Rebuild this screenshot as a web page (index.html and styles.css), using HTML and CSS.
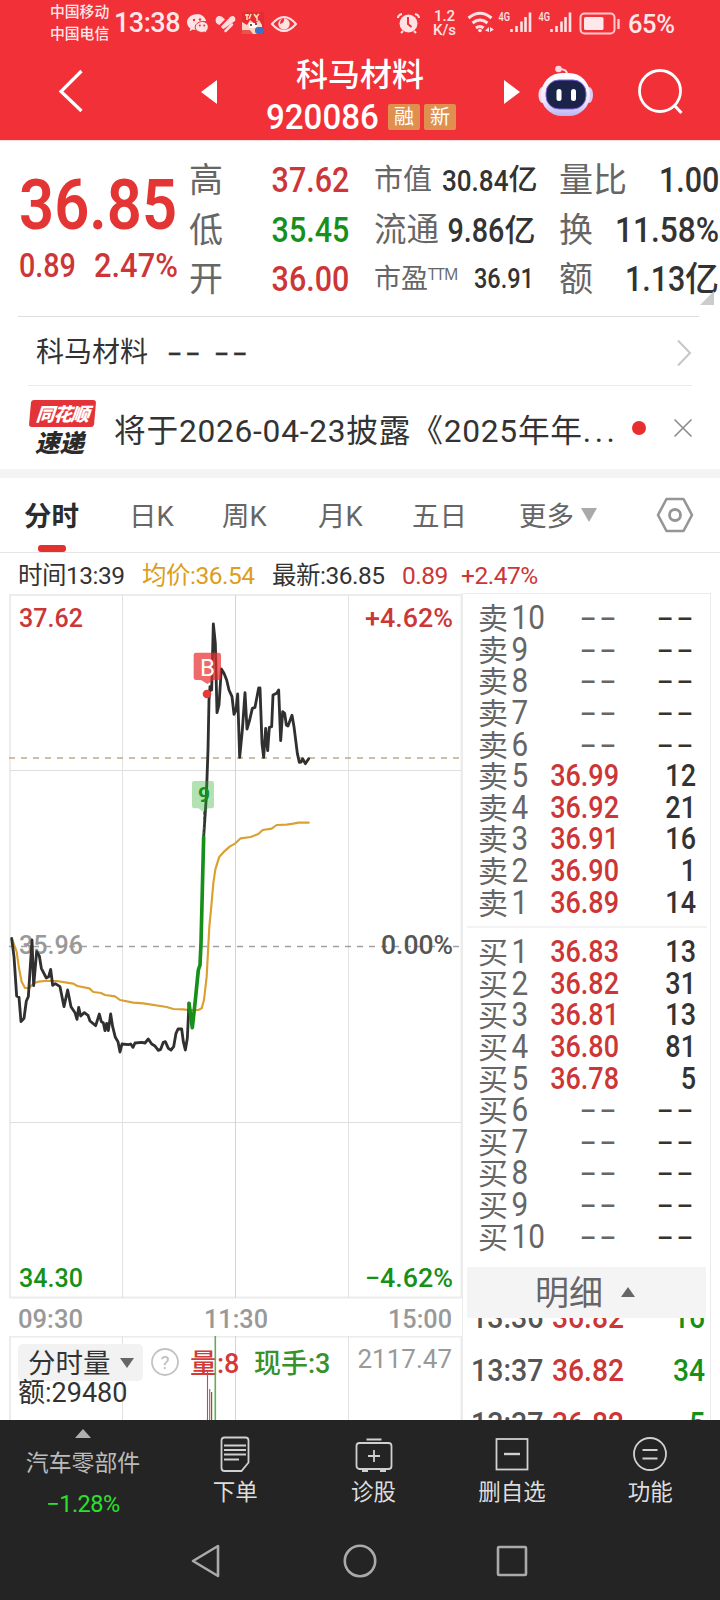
FILE: index.html
```html
<!DOCTYPE html>
<html lang="zh-CN">
<head>
<meta charset="utf-8">
<title>科马材料 920086</title>
<link rel="stylesheet" href="styles.css">
</head>
<body>
<div class="app">
  <div class="status">
    <div class="carriers"><span>中国移动</span><span>中国电信</span></div>
    <span class="clock">13:38</span>
    <svg class="status-left" width="112" height="26" viewBox="185 9 112 26">
      <g fill="#ffe3e4">
        <path d="M197.500 13c-6 0-10.500 3.700-10.500 8.300 0 2.500 1.300 4.700 3.400 6.200l-.8 2.800 3.200-1.700c1 .3 2 .5 3.200.5-.9-5.500 4-9.300 10.200-9.100-1.200-4-4.700-7-8.700-7z"/>
        <path d="M201.500 20.500c-3.600.6-6.300 2.900-6.300 5.500 0 2.800 2.600 5.400 6.600 5.400 1 0 1.800-.1 2.600-.4l2.500 1.300-.6-2.200c1.400-1.100 2-2.500 2-4.100 0-3.400-3-5.900-6.800-5.500z" stroke="#f23038" stroke-width="1"/>
      </g>
      <g fill="#f23038"><circle cx="194" cy="19" r="1.200"/><circle cx="200" cy="18.500" r="1.200"/><circle cx="199.800" cy="24.500" r="1"/><circle cx="204.200" cy="24.500" r="1"/></g>
      <path d="M216 21.500q-1.500-5 2.500-6.500q3-.5 5 2l1.500 1.500l-5.500 5.500q-2.500-1-3.500-2.500zM221 25.500l9-9.500q3-2 5 .5q.8 2 0 3.500l-11.500 8q-2-1-2.500-2.500zM226 30l6-7" fill="#ffdcde"/>
      <path d="M219.500 25.500l9-9M225 30.500l9-9" stroke="#f23038" stroke-width="1.300"/>
      <path d="M225.500 30l6.500-6.500" stroke="#ffdcde" stroke-width="2.500" stroke-linecap="round"/>
      <rect x="242" y="11" width="22" height="22" fill="#e52c35"/>
      <path d="M245 14h4m-2-1v6m4-6l-2 5m5-5l2 3 3-3m-2 2v5" stroke="#ffe0b0" stroke-width="1.500" fill="none"/>
      <path d="M242 21l5 3 3-5 5 4 4-4 3 5v9h-20z" fill="#fbd5c8"/><path d="M249 22h8v5h-8z" fill="#fff"/>
      <circle cx="251" cy="24" r="1" fill="#222"/><circle cx="256" cy="23" r="1" fill="#222"/>
      <path d="M242 29h8l3 4h-11z" fill="#e8534a"/><rect x="255" y="26" width="9" height="7" rx="3" fill="#3973c8"/>
      <path d="M272 23q12-14 24 0q-12 14-24 0z" fill="none" stroke="#ffe3e4" stroke-width="2"/>
      <circle cx="284" cy="23" r="5.700" fill="#ffe3e4"/><path d="M284 17q1 5-4 6 0-5 4-6z" fill="#f23038"/>
    </svg>
    <svg class="status-right" width="226" height="30" viewBox="395 8 226 30">
      <circle cx="408.500" cy="23.500" r="9" fill="#ffe3e4"/>
      <path d="M408 17v7l3.500 3" fill="none" stroke="#f23038" stroke-width="2"/>
      <path d="M398 18q0-3 4-4m17 4q0-3-4-4M403 31l-2 2m13-2l2 2" fill="none" stroke="#ffe3e4" stroke-width="2"/>
      <g class="status-text" fill="#ffe3e4">
        <text x="434" y="21" font-size="15" textLength="21">1.2</text>
        <text x="433" y="35" font-size="15" textLength="23">K/s</text>
        <text x="498.500" y="21" font-size="12.500" textLength="11.500" lengthAdjust="spacingAndGlyphs">4G</text>
        <text x="538.500" y="21" font-size="12.500" textLength="11.500" lengthAdjust="spacingAndGlyphs">4G</text>
      </g>
      <g fill="none" stroke="#ffe3e4" stroke-width="3"><path d="M468.500 18q11.500-9.500 23 0"/><path d="M472.500 23q7.500-6 15 0"/><path d="M476 28q4-3 7.500 0"/></g>
      <circle cx="480" cy="30.500" r="1.800" fill="#ffe3e4"/>
      <path d="M489 27v5l-4-1.500zM490 27v5l4-2.500z" fill="#ffe3e4"/>
      <path d="M511.500 29v3M516.500 26v6M521.500 21.500v10.500M525.500 17v15M530 12.500v19.500M551.500 29v3M556.500 26v6M561.500 21.500v10.500M565.500 17v15M570 12.500v19.500" stroke="#ffe3e4" stroke-width="2.600"/>
      <rect x="580.500" y="13.500" width="34" height="20" rx="4" fill="none" stroke="#ffc9cc" stroke-width="2"/>
      <rect x="584" y="17" width="19.500" height="13" rx="1.500" fill="#ffe8e9"/>
      <path d="M618.500 19v10" stroke="#ffc9cc" stroke-width="2.500"/>
    </svg>
    <span class="battery">65%</span>
  </div>

  <div class="header">
    <svg class="back" width="26" height="44" viewBox="0 0 26 44"><path d="M23.500 2L3 22.500L23.500 42" fill="none" stroke="#fff" stroke-width="3.200"/></svg>
    <svg class="prev" width="16" height="24" viewBox="0 0 16 24"><path d="M16 0v24L0 12z" fill="#fff"/></svg>
    <div class="title">
      <div class="name">科马材料</div>
      <div class="code"><span class="code-num">920086</span><span class="badge">融</span><span class="badge">新</span></div>
    </div>
    <svg class="next" width="16" height="24" viewBox="0 0 16 24"><path d="M0 0v24l16-12z" fill="#fff"/></svg>
    <svg class="robot" width="56" height="52" viewBox="0 0 56 52">
      <defs><linearGradient id="shell" x1="0" y1="0" x2="0" y2="1"><stop offset="0" stop-color="#fff"/><stop offset=".65" stop-color="#f3e6fb"/><stop offset="1" stop-color="#b9b7f2"/></linearGradient></defs>
      <path d="M29 9q0-5-8-5" fill="none" stroke="#f9dbe4" stroke-width="2"/><circle cx="20.500" cy="4" r="3.300" fill="#f7d7e2"/>
      <ellipse cx="4.500" cy="30" rx="4" ry="8" fill="#e9daf4"/><ellipse cx="51" cy="30" rx="4" ry="8" fill="#d7cdf6"/>
      <rect x="3" y="8" width="49" height="43" rx="21" fill="url(#shell)"/>
      <rect x="8" y="15" width="40" height="29" rx="13" fill="#1b2349" stroke="#7b62df" stroke-width="1"/>
      <rect x="18.500" y="24" width="5" height="12" rx="2.500" fill="#fff"/><rect x="33" y="24" width="5" height="12" rx="2.500" fill="#fff"/>
    </svg>
    <svg class="search" width="48" height="46" viewBox="0 0 48 46"><circle cx="23" cy="22" r="20.500" fill="none" stroke="#fff" stroke-width="2.800"/><path d="M37 36l7.500 8" stroke="#fff" stroke-width="3"/></svg>
  </div>

  <div class="quote">
    <div class="last">
      <div class="price"><span class="n l">36.85</span></div>
      <div class="delta"><span class="n l">0.89</span><span class="n l pct">2.47%</span></div>
    </div>
    <div class="stat s1">
      <div><span>高</span><b class="n red">37.62</b></div>
      <div><span>低</span><b class="n green">35.45</b></div>
      <div><span>开</span><b class="n red">36.00</b></div>
    </div>
    <div class="stat s2">
      <div class="a"><span>市值</span><b><i class="n">30.84</i>亿</b></div>
      <div class="b"><span>流通</span><b><i class="n">9.86</i>亿</b></div>
      <div class="c"><span>市盈<sup>TTM</sup></span><b><i class="n">36.91</i></b></div>
    </div>
    <div class="stat s3">
      <div><span>量比</span><b><i class="n">1.00</i></b></div>
      <div><span>换</span><b><i class="n wide">11.58%</i></b></div>
      <div><span>额</span><b><i class="n">1.13</i>亿</b></div>
    </div>
    <i class="corner"></i>
  </div>

  <div class="company">
    <span>科马材料</span><span class="hy">--</span><span class="hy">--</span>
    <svg width="16" height="28" viewBox="0 0 16 28"><path d="M2 1.500L14 14L2 26.500" fill="none" stroke="#c6c6c6" stroke-width="2"/></svg>
  </div>

  <div class="notice">
    <div class="brand"><span class="brand-top">同花顺</span><span class="brand-bottom">速递</span></div>
    <span class="news">将于2026-04-23披露《2025年年<i>...</i></span>
    <i class="dot"></i>
    <svg width="20" height="20" viewBox="0 0 20 20"><path d="M1.500 1.500l17 17m0-17l-17 17" stroke="#8e8e8e" stroke-width="1.700"/></svg>
  </div>

  <div class="tabs">
    <span class="t1 active">分时</span><span class="t2">日K</span><span class="t3">周K</span><span class="t4">月K</span><span class="t5">五日</span>
    <span class="t6">更多</span><i class="down"></i>
    <svg width="38" height="36" viewBox="0 0 38 36"><path d="M10.500 2h17l8.500 16l-8.500 16h-17l-8.500-16z" fill="none" stroke="#959595" stroke-width="2.600" stroke-linejoin="round"/><circle cx="19" cy="18" r="5.500" fill="none" stroke="#959595" stroke-width="2.800"/></svg>
  </div>

  <div class="info">
    <span class="i1">时间13:39</span><span class="i2">均价:36.54</span><span class="i3">最新:36.85</span><span class="i4">0.89</span><span class="i5">+2.47%</span>
  </div>

  <div class="main">
    <div class="chart">
      <svg width="463" height="746" viewBox="0 590 463 746">
        <g fill="none" stroke="#ececec">
          <rect x="10" y="595" width="451.500" height="702.500" stroke-width="2"/>
          <path d="M10 770.500h451M10 1122.500h451" stroke="#dedede"/>
          <path d="M122.500 595v703M348.500 595v703" stroke="#e2e2e2"/><path d="M235.500 595v703" stroke="#d4d4d4"/>
        </g>
        <path d="M9 758h452" stroke="#bfa985" stroke-width="1.700" stroke-dasharray="6 6"/>
        <path d="M9 946.500h452" stroke="#a0a0a0" stroke-width="1.700" stroke-dasharray="6 6"/>
        <g class="axis">
          <text x="19" y="627" fill="#cc3636" textLength="64" lengthAdjust="spacingAndGlyphs">37.62</text>
          <text x="365" y="627" fill="#cc3636" textLength="88" lengthAdjust="spacingAndGlyphs">+4.62%</text>
          <text x="19" y="953.500" fill="#999" textLength="64" lengthAdjust="spacingAndGlyphs">35.96</text>
          <text x="381" y="953.500" fill="#555" textLength="72" lengthAdjust="spacingAndGlyphs">0.00%</text>
          <text x="19" y="1287" fill="#169016" textLength="64" lengthAdjust="spacingAndGlyphs">34.30</text>
          <text x="365" y="1287" fill="#169016" textLength="88" lengthAdjust="spacingAndGlyphs">−4.62%</text>
          <text x="18" y="1328" fill="#999" textLength="65" lengthAdjust="spacingAndGlyphs">09:30</text>
          <text x="204" y="1328" fill="#999" textLength="64" lengthAdjust="spacingAndGlyphs">11:30</text>
          <text x="388" y="1328" fill="#999" textLength="64" lengthAdjust="spacingAndGlyphs">15:00</text>
        </g>
        <g transform="translate(0 590) scale(.333333)" fill="none" stroke-linejoin="round" stroke-linecap="round">
          <polyline stroke="#dba032" stroke-width="6.500" points="36,1047 50,1085 57,1135 65,1175 75,1194 88,1194 100,1180 115,1175 135,1173 170,1173 200,1178 220,1181 232,1188 268,1195 280,1206 303,1209 315,1215 345,1219 360,1230 400,1238 430,1240 500,1251 520,1257 550,1258 565,1260 595,1260 605,1255 612,1230 620,1160 628,1010 632,970 640,880 646,838 658,800 672,785 690,769 706,760 722,745 752,741 775,732 788,720 815,716 830,705 860,704 880,701 895,698 926,698"/>
          <polyline stroke="#303030" stroke-width="8.500" points="35,1045 42,1100 50,1218 57,1222 63,1295 72,1285 79,1233 85,1220 96,1050 101,1187 110,1085 118,1098 124,1135 139,1164 146,1160 152,1138 158,1186 166,1181 180,1190 192,1250 203,1200 213,1250 225,1268 231,1288 236,1252 242,1278 253,1268 264,1276 270,1293 287,1307 298,1272 304,1295 310,1298 315,1322 320,1300 325,1322 332,1272 338,1310 346,1342 354,1355 360,1386 366,1362 385,1364 392,1362 399,1372 405,1359 425,1357 435,1359 445,1347 455,1362 464,1367 475,1381 482,1378 490,1357 496,1355 505,1375 513,1380 521,1370 528,1330 534,1317 545,1317 550,1355 556,1380 562,1345 567,1240"/>
          <polyline stroke="#303030" stroke-width="8.500" points="611,740 619,620 624,480 627,330 630,290 635,300 640,102 646,160 651,368 657,345 664,237 672,250 680,270 687,300 696,320 702,373 708,360 713,312 719,502 727,420 735,308 741,417 749,390 757,355 765,352 776,294 780,294 786,460 791,502 797,415 803,482 808,412 815,410 819,315 830,310 836,300 842,452 848,365 854,370 859,405 864,408 876,376 882,410 892,490 898,517 903,516 908,506 916,521 926,506"/>
          <polyline stroke="#168f1b" stroke-width="11" points="567,1240 571,1270 577,1313 585,1240 595,1140 600,1125 603,1060 607,900 611,742"/>
          <path d="M611 665v70" stroke="#168f1b" stroke-width="3" stroke-dasharray="9 6" stroke-linecap="butt"/>
          <path d="M588 188h68q7 0 7 7v68q0 7-7 7h-15l-19 12l-19-12h-15q-7 0-7-7v-68q0-7 7-7z" fill="#e82c2c" fill-opacity=".7"/>
          <circle cx="621" cy="312" r="13" fill="#e43a3a"/>
          <path d="M583 573h52q7 0 7 7v68q0 7-7 7h-10l-14 12l-16-12h-12q-7 0-7-7v-68q0-7 7-7z" fill="#35b135" fill-opacity=".38"/>
        </g>
        <text class="mark" x="200" y="676" fill="#fff" font-size="24">B</text>
        <text class="mark nine" x="198" y="802" fill="#168f1b" font-size="21">9</text>
      </svg>
      <div class="volume">
        <svg class="vol-lines" width="463" height="84" viewBox="0 1336 463 84">
          <path d="M9 1336.500h453M10 1336v84M461.500 1336v84" stroke="#ececec" stroke-width="2"/>
          <path d="M122.500 1336v84M348.500 1336v84" stroke="#e2e2e2"/><path d="M235.500 1336v84" stroke="#d4d4d4"/>
        </svg>
        <span class="picker">分时量<i class="down dark"></i></span>
        <svg class="help" width="28" height="28" viewBox="0 0 28 28"><circle cx="14" cy="14" r="13" fill="none" stroke="#c3c3c3" stroke-width="1.800"/><text x="14" y="20.500" text-anchor="middle">?</text></svg>
        <span class="v1">量:8</span><span class="v2">现手:3</span><span class="v3">2117.47</span>
        <span class="v4">额:29480</span>
        <svg class="vol-lines" width="463" height="84" viewBox="0 1336 463 84">
          <path d="M215.300 1335v85" stroke="#5faf55" stroke-width="1.600"/><path d="M207.500 1371v49M209.700 1389v31" stroke="#cf4747" stroke-width="1.100"/><path d="M211.600 1392v28" stroke="#3f7f35" stroke-width="1.200"/>
        </svg>
      </div>
    </div>

    <div class="book">
      <div class="side">
        <div class="row"><span>卖<i>10</i></span><b class="hy">--</b><em class="hy">--</em></div>
        <div class="row"><span>卖<i>9</i></span><b class="hy">--</b><em class="hy">--</em></div>
        <div class="row"><span>卖<i>8</i></span><b class="hy">--</b><em class="hy">--</em></div>
        <div class="row"><span>卖<i>7</i></span><b class="hy">--</b><em class="hy">--</em></div>
        <div class="row"><span>卖<i>6</i></span><b class="hy">--</b><em class="hy">--</em></div>
        <div class="row"><span>卖<i>5</i></span><b class="n">36.99</b><em class="n">12</em></div>
        <div class="row"><span>卖<i>4</i></span><b class="n">36.92</b><em class="n">21</em></div>
        <div class="row"><span>卖<i>3</i></span><b class="n">36.91</b><em class="n">16</em></div>
        <div class="row"><span>卖<i>2</i></span><b class="n">36.90</b><em class="n">1</em></div>
        <div class="row"><span>卖<i>1</i></span><b class="n">36.89</b><em class="n">14</em></div>
      </div>
      <div class="side buy">
        <div class="row"><span>买<i>1</i></span><b class="n">36.83</b><em class="n">13</em></div>
        <div class="row"><span>买<i>2</i></span><b class="n">36.82</b><em class="n">31</em></div>
        <div class="row"><span>买<i>3</i></span><b class="n">36.81</b><em class="n">13</em></div>
        <div class="row"><span>买<i>4</i></span><b class="n">36.80</b><em class="n">81</em></div>
        <div class="row"><span>买<i>5</i></span><b class="n">36.78</b><em class="n">5</em></div>
        <div class="row"><span>买<i>6</i></span><b class="hy">--</b><em class="hy">--</em></div>
        <div class="row"><span>买<i>7</i></span><b class="hy">--</b><em class="hy">--</em></div>
        <div class="row"><span>买<i>8</i></span><b class="hy">--</b><em class="hy">--</em></div>
        <div class="row"><span>买<i>9</i></span><b class="hy">--</b><em class="hy">--</em></div>
        <div class="row"><span>买<i>10</i></span><b class="hy">--</b><em class="hy">--</em></div>
      </div>
      <div class="detail">明细<i class="up"></i></div>
      <div class="ticks">
        <div class="tick"><span class="n l">13:36</span><b class="n">36.82</b><em class="n">16</em></div>
        <div class="tick"><span class="n l">13:37</span><b class="n">36.82</b><em class="n">34</em></div>
        <div class="tick"><span class="n l">13:37</span><b class="n">36.82</b><em class="n">5</em></div>
      </div>
    </div>
  </div>

  <div class="footer">
    <div class="actions">
      <div class="sector"><i class="up"></i><span>汽车零部件</span><b>−1.28%</b></div>
      <div class="act"><svg width="40" height="38" viewBox="0 0 40 38"><path d="M7.500 2.500h21q3 0 3 3v22l-7 8.500h-17q-3 0-3-3v-27.500q0-3 3-3z"/><path d="M7 10.500h22M7 15h22M7 19.500h22M7 24.500h15"/></svg><span>下单</span></div>
      <div class="act"><svg width="40" height="38" viewBox="0 0 40 38"><rect x="2.500" y="8" width="35" height="26" rx="3"/><path d="M12.500 4.500h15M20 15v12M14 21h12M8 36h6M26 36h6"/></svg><span>诊股</span></div>
      <div class="act"><svg width="40" height="38" viewBox="0 0 40 38"><rect x="4.500" y="4" width="31" height="30.500"/><path d="M12 19h16" stroke-width="2.400"/></svg><span>删自选</span></div>
      <div class="act"><svg width="40" height="38" viewBox="0 0 40 38"><circle cx="20" cy="19" r="16"/><path d="M12.500 15h15M12.500 23.500h15"/></svg><span>功能</span></div>
    </div>
    <div class="nav">
      <svg width="30" height="36" viewBox="0 0 30 36"><path d="M27 3v30L2 18z" stroke-linejoin="round"/></svg>
      <svg width="36" height="36" viewBox="0 0 36 36"><circle cx="18" cy="18" r="15.200"/></svg>
      <svg width="32" height="32" viewBox="0 0 32 32"><rect x="2" y="2" width="28" height="28" rx="1"/></svg>
    </div>
  </div>
</div>
</body>
</html>
```

FILE: styles.css
```css
* { box-sizing: border-box; }
body { margin: 0; background: #fff; font-family: Roboto, "Noto Sans CJK SC", sans-serif; color: #333; }
i, em { font-style: normal; }
b { font-weight: 500; }
svg { display: block; flex: none; }
.app { width: 720px; height: 1600px; overflow: hidden; display: flex; flex-direction: column; }
.n { display: inline-block; transform: scaleX(.87); transform-origin: 100% 50%; }
.n.l { transform-origin: 0 50%; }
.red { color: #cc3636; }
.green { color: #168f1b; }
.hy { display: inline-block; font-family: "DejaVu Sans", sans-serif; letter-spacing: 1.2px; transform: scaleX(1.5); transform-origin: 100% 50%; font-weight: 400; }

.status { height: 46px; background: #f23038; color: #ffe8e9; display: flex; align-items: center; padding-left: 50px; flex: none; }
.carriers { display: flex; flex-direction: column; font-size: 14.800px; line-height: 22px; width: 62px; font-weight: 500; }
.clock { font-size: 27px; width: 73px; padding-left: 2px; letter-spacing: -.5px; font-weight: 500; }
.status-right { margin-left: 98px; }
.status-text { font-family: Roboto, sans-serif; font-weight: 500; }
.battery { font-size: 25.500px; font-weight: 500; margin-left: 7px; letter-spacing: -.4px; padding-top: 2px; }

.header { height: 94px; background: #f23038; color: #fff; display: flex; align-items: flex-start; padding-left: 58px; flex: none; }
.back { margin-top: 23px; }
.prev { margin: 34px 0 0 117px; }
.title { width: 240px; margin-left: 49px; }
.name { font-size: 32px; line-height: 40px; margin-top: 9px; padding-left: 30px; font-weight: 500; }
.code { display: flex; height: 40px; align-items: center; margin-top: 2px; }
.code-num { font-size: 35px; font-weight: 500; transform: scaleX(.945); transform-origin: 0 50%; width: 122px; }
.badge { width: 32px; height: 26px; background: #e0904e; border-radius: 2px; font-size: 20px; line-height: 26px; text-align: center; margin-right: 4px; margin-top: -1px; }
.next { margin: 34px 0 0 -2px; }
.robot { margin: 19px 0 0 18px; }
.search { margin: 23px 0 0 43px; }

.quote { height: 177px; display: flex; position: relative; flex: none; border-top: 1px solid #ffdfe1; }
.quote::after { content: ""; position: absolute; left: 18px; right: 21px; bottom: 0; height: 1px; background: #dedede; }
.last { width: 189px; padding-left: 19px; color: #e43535; }
.price { font-size: 69.500px; line-height: 80px; font-weight: 600; margin-top: 25px; }
.price .n { transform: scaleX(.885); }
.delta { font-size: 33px; line-height: 40px; margin-top: 0; color: #cc3636; font-weight: 500; display: flex; }
.delta .pct { margin-left: 10px; transform: scaleX(.935); }
.stat { display: flex; flex-direction: column; padding-top: 15px; flex: none; }
.stat > div { height: 49.500px; display: flex; align-items: center; justify-content: space-between; line-height: 49px; white-space: nowrap; }
.stat span { color: #666; }
.stat b { display: flex; }
.s1 { width: 160px; font-size: 34px; }
.s1 b, .s3 b { font-size: 35px; }
.s2 { width: 161px; margin-left: 25px; }
.s2 .a { font-size: 29px; }
.s2 .a i { font-size: 30px; }
.s2 .b { font-size: 32.500px; }
.s2 .b b { font-size: 31px; }
.s2 .b i { font-size: 33px; }
.s2 .c { font-size: 27px; padding-right: 1px; }
.s2 .c i { font-size: 27px; }
.s2 .c sup { font-family: "Open Sans", sans-serif; font-size: 16px; font-weight: 400; letter-spacing: -.8px; line-height: 0; vertical-align: 8px; }
.s3 { width: 160px; margin-left: 24px; font-size: 34px; }
.s3 > div:nth-child(3) b { font-size: 34px; }
.s3 > div:nth-child(3) i { font-size: 35px; }
.s3 .wide { transform: scaleX(.905); }
.corner { position: absolute; left: 700px; top: 150px; border: 7px solid; border-color: transparent #ccc #ccc transparent; }

.company { height: 69px; margin: 0 28px; border-bottom: 1px solid #eaeaea; display: flex; align-items: center; padding: 4px 0 0 8px; font-size: 28px; line-height: 40px; flex: none; }
.company .hy { transform-origin: 0 50%; margin-left: 19px; width: 28px; font-size: 28px; letter-spacing: 2px; -webkit-text-stroke: .3px #333; }
.company svg { margin-left: auto; }

.notice { height: 83px; display: flex; align-items: center; padding-left: 28px; flex: none; }
.brand { width: 68px; height: 56px; display: flex; flex-direction: column; align-items: center; font-weight: 900; font-style: italic; }
.brand span { font-family: "Noto Sans CJK SC", sans-serif; }
.brand-top { width: 65px; height: 28px; background: #e43338; color: #fff; border-radius: 3px; font-size: 18.500px; line-height: 27px; text-align: center; transform: skewX(-5deg); letter-spacing: -1px; }
.brand-bottom { font-size: 24.500px; line-height: 29px; color: #2b2b2b; margin-left: -5px; }
.news { font-size: 31.700px; margin-left: 18px; width: 508px; white-space: nowrap; letter-spacing: .75px; }
.news i { letter-spacing: 3.500px; }
.dot { width: 14px; height: 14px; border-radius: 50%; background: #e82e2e; margin: 0 0 0 10px; }
.notice svg { margin-left: 27px; }

.tabs { height: 84px; border-top: 9px solid #f4f4f4; border-bottom: 1px solid #e6e6e6; display: flex; align-items: center; padding-left: 24px; font-size: 27.500px; color: #666; position: relative; flex: none; }
.tabs span { line-height: 70px; padding-top: 4px; }
.tabs .active { color: #2c2c2c; font-weight: 700; position: relative; }
.active::after { content: ""; position: absolute; left: 14px; bottom: 0; width: 28px; height: 7px; border-radius: 3px; background: #e53030; }
.t1 { width: 105px; } .t2 { width: 93px; } .t3 { width: 96px; } .t4 { width: 94px; } .t5 { width: 107px; } .t6 { width: 62px; }
.down { border: 8px solid transparent; border-top: 14px solid #aaa; border-bottom: 0; }
.tabs svg { margin-left: 59px; }

.info { height: 40px; display: grid; grid-template-columns: 124px 130px 130px 59px 90px; padding: 3px 0 0 18px; font-size: 24.500px; line-height: 39px; flex: none; white-space: nowrap; letter-spacing: -.5px; }
.i2 { color: #dc9d20; } .i4, .i5 { color: #cc3636; }

.main { height: 830px; display: flex; position: relative; margin-top: -3px; flex: none; overflow: hidden; }
.chart { width: 463px; }
.axis text { font-family: Roboto, sans-serif; font-size: 26px; font-weight: 500; }
.mark { font-family: Roboto, sans-serif; }
.nine { font-weight: 700; }
.volume { height: 84px; position: relative; }
.volume > * { position: absolute; line-height: 36px; }
.vol-lines { left: 0; top: 0; }
.picker { left: 18px; top: 8px; width: 125px; height: 37px; border-radius: 5px; background: #f2f2f2; font-size: 27.500px; padding: 3px 0 0 10px; display: flex; align-items: center; gap: 9px; }
.down.dark { border-width: 10px 7px 0; border-top-color: #666; margin-top: -3px; }
.help { left: 151px; top: 12px; }
.help text { fill: #bbb; font-size: 19px; }
.v1 { left: 190px; top: 10px; color: #d23a3a; font-size: 27px; font-weight: 500; }
.v2 { left: 254px; top: 10px; color: #38912a; font-size: 27px; font-weight: 500; }
.v3 { right: 11px; top: 5px; color: #999; font-size: 26px; }
.v4 { left: 18px; top: 39px; font-size: 27px; }

.book { width: 249px; margin: 3px 0 0 -1px; border: 1px solid #ebebeb; border-bottom: 0; padding-left: 4px; }
.side { height: 334px; width: 240px; padding-top: 8px; border-bottom: 2px solid #f3f3f3; }
.buy { padding-top: 8px; height: 339px; border: 0; }
.row { height: 31.630px; display: grid; grid-template-columns: 52px 88px 77px; padding-left: 12px; line-height: 31.600px; font-size: 31px; }
.row span { color: #666; font-size: 30px; white-space: nowrap; margin-left: -1px; }
.row span i { display: inline-block; font-size: 33px; transform: scaleX(.9); transform-origin: 0 50%; padding-left: 4px; }
.row b, .row em { text-align: right; }
.row .n { font-weight: 500; }
.row b.n { color: #cc3636; }
.row .hy { font-size: 32px; letter-spacing: 1.600px; }
.row b.hy { color: #666; }
.detail { height: 51px; width: 239px; background: #f4f4f4; display: flex; align-items: center; padding: 2px 0 0 68px; font-size: 34px; line-height: 49px; color: #666; gap: 18px; position: relative; z-index: 1; }
.up { border: 7px solid transparent; border-bottom: 10px solid #666; border-top: 0; }
.detail .up { margin-top: -4px; }
.ticks { margin-top: -27px; }
.tick { height: 53px; display: grid; grid-template-columns: 75px 78px 83px; padding-left: 4px; font-size: 31px; line-height: 53px; }
.tick .n { font-weight: 500; color: #555; }
.tick b, .tick em { text-align: right; }
.tick b.n { color: #cc3636; transform: translateX(-1px) scaleX(.91); }
.tick em.n { color: #168f1b; transform: translateX(-2px) scaleX(.91); }
.tick span.n { transform: scaleX(.92); }

.footer { height: 180px; background: #242424; flex: none; }
.actions { display: flex; height: 100px; padding-left: 14px; }
.sector { width: 138px; margin-right: 14px; display: flex; flex-direction: column; align-items: center; color: #bbb; font-size: 22.900px; padding-top: 9px; }
.sector .up { border-width: 0 8px 9px; border-bottom-color: #b0b0b0; }
.sector span { line-height: 34px; margin-top: 9px; }
.sector b { color: #2be02b; font-size: 23.500px; line-height: 30px; margin-top: 8px; font-weight: 400; letter-spacing: -.5px; }
.act { width: 138.400px; display: flex; flex-direction: column; align-items: center; color: #ddd; font-size: 22.500px; padding-top: 15px; }
.act:nth-child(2) svg { margin-left: 4px; }
.act svg, .nav svg { fill: none; stroke: #d0d0d0; stroke-width: 1.800; }
.act span { line-height: 34px; margin-top: 2px; }
.nav { height: 80px; display: flex; align-items: center; padding: 2px 0 0 191px; }
.nav svg { stroke: #aaa; stroke-width: 2.600; }
.nav svg:nth-child(2) { margin-left: 121px; }
.nav svg:nth-child(3) { margin-left: 118px; }
```
